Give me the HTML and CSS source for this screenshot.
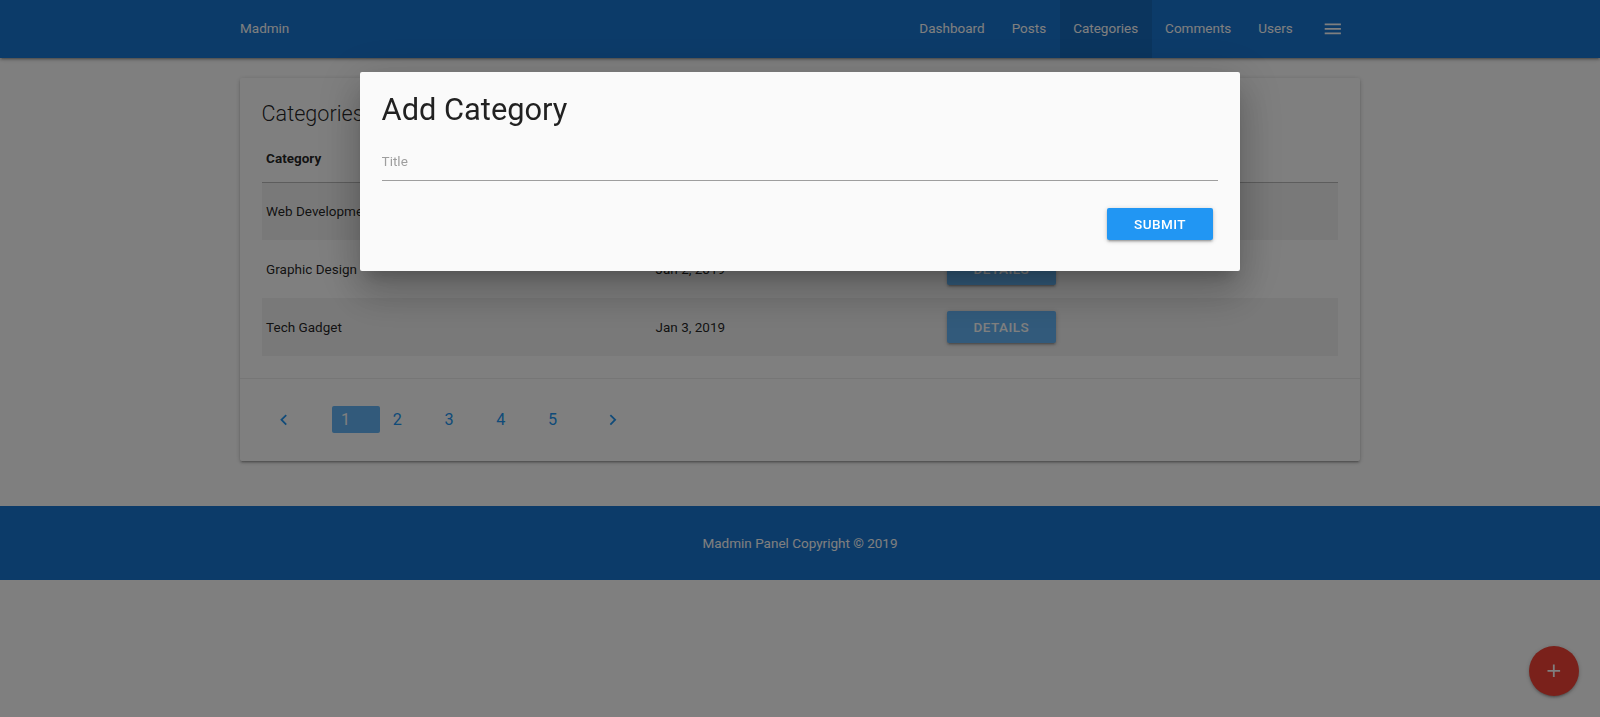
FILE: index.html
```html
<!DOCTYPE html>
<html lang="en">
<head>
<meta charset="utf-8">
<title>Madmin - Categories</title>
<link rel="stylesheet" href="styles.css">
</head>
<body>
<nav class="navbar">
  <div class="container nav-wrapper">
    <a class="brand" href="#">Madmin</a>
    <ul class="nav-links">
      <li><a href="#">Dashboard</a></li>
      <li><a href="#">Posts</a></li>
      <li class="active"><a href="#">Categories</a></li>
      <li><a href="#">Comments</a></li>
      <li><a href="#">Users</a></li>
      <li><a href="#" class="menu-link"><svg viewBox="0 0 24 24"><path d="M3 18h18v-2H3v2zm0-5h18v-2H3v2zm0-7v2h18V6H3z"/></svg></a></li>
    </ul>
  </div>
</nav>

<main class="main">
  <div class="container">
    <div class="card">
      <div class="card-content">
        <span class="card-title">Categories</span>
        <table class="striped">
          <thead>
            <tr><th class="col-name">Category</th><th class="col-date">Date Created</th><th>Actions</th></tr>
          </thead>
          <tbody>
            <tr><td>Web Development</td><td>Jan 1, 2019</td><td><a href="#" class="btn btn-light">Details</a></td></tr>
            <tr><td>Graphic Design</td><td>Jan 2, 2019</td><td><a href="#" class="btn btn-light">Details</a></td></tr>
            <tr><td>Tech Gadget</td><td>Jan 3, 2019</td><td><a href="#" class="btn btn-light">Details</a></td></tr>
          </tbody>
        </table>
      </div>
      <div class="card-action">
        <ul class="pagination">
          <li class="chev prev"><a href="#"><svg viewBox="0 0 24 24"><path d="M15.41 7.41L14 6l-6 6 6 6 1.41-1.41L10.83 12z"/></svg></a></li>
          <li class="num active"><a href="#">1</a></li>
          <li class="num"><a href="#">2</a></li>
          <li class="num"><a href="#">3</a></li>
          <li class="num"><a href="#">4</a></li>
          <li class="num"><a href="#">5</a></li>
          <li class="chev next"><a href="#"><svg viewBox="0 0 24 24"><path d="M10 6L8.59 7.41 13.17 12l-4.58 4.59L10 18l6-6z"/></svg></a></li>
        </ul>
      </div>
    </div>
  </div>
</main>

<footer class="page-footer">
  <div class="footer-text">Madmin Panel Copyright © 2019</div>
</footer>

<a href="#" class="fab"><svg viewBox="0 0 24 24"><path d="M19 13h-6v6h-2v-6H5v-2h6V5h2v6h6v2z"/></svg></a>

<div class="modal-overlay"></div>

<div class="modal">
  <div class="modal-content">
    <h4 class="modal-title">Add Category</h4>
    <form class="modal-form">
      <div class="field">
        <input type="text" placeholder="Title">
      </div>
      <div class="actions">
        <button type="button" class="btn btn-primary">Submit</button>
      </div>
    </form>
  </div>
</div>
</body>
</html>
```

FILE: styles.css
```css
* { box-sizing: border-box; }

html, body {
  margin: 0;
  padding: 0;
}

body {
  font-family: Roboto, "Noto Sans", "Liberation Sans", sans-serif;
  font-size: 13.5px;
  line-height: 1.5;
  color: rgba(0, 0, 0, 0.87);
  background: #fff;
}

a { text-decoration: none; }

.container {
  width: 70%;
  margin: 0 auto;
}

/* Navbar */
.navbar {
  position: relative;
  z-index: 2;
  height: 57.6px;
  background: #1976d2;
  box-shadow: 0 2px 2px 0 rgba(0,0,0,.14), 0 3px 1px -2px rgba(0,0,0,.12), 0 1px 5px 0 rgba(0,0,0,.2);
}

.nav-wrapper {
  display: flex;
  justify-content: space-between;
  height: 100%;
}

.brand {
  color: #fff;
  font-size: 13.5px;
  line-height: 57.6px;
}

.nav-links {
  display: flex;
  list-style: none;
  margin: 0 2.6px 0 0;
  padding: 0;
}

.nav-links a {
  display: block;
  height: 57.6px;
  padding: 0 13.5px;
  color: #fff;
  font-size: 13.5px;
  line-height: 57.6px;
}

.nav-links .active a {
  background: rgba(0, 0, 0, 0.1);
}

.nav-links .menu-link {
  display: flex;
  align-items: center;
  margin-left: 2.6px;
}

.menu-link svg {
  display: block;
  width: 21.6px;
  height: 21.6px;
  fill: #fff;
}

/* Main */
.main {
  padding: 20.4px 0 45px;
}

.card {
  background: #fff;
  border-radius: 2px;
  box-shadow: 0 2px 2px 0 rgba(0,0,0,.14), 0 3px 1px -2px rgba(0,0,0,.12), 0 1px 5px 0 rgba(0,0,0,.2);
}

.card-content {
  padding: 21.6px;
}

.card-title {
  display: block;
  font-size: 21.6px;
  font-weight: 300;
  line-height: 28.8px;
  margin-bottom: 7.2px;
}

.striped {
  width: 100%;
  border-collapse: collapse;
}

.striped thead tr {
  border-bottom: 1px solid rgba(0, 0, 0, 0.12);
}

.striped th {
  text-align: left;
  font-weight: 700;
  padding: 12.6px 4.5px 13.1px;
  line-height: 20.25px;
}

.striped .col-name { width: 36.17%; }
.striped .col-date { width: 27.02%; }

.striped td {
  height: 58.1px;
  padding: 0 4.5px;
  vertical-align: middle;
  line-height: 20.25px;
}

.striped tbody tr:nth-child(odd) {
  background: #f2f2f2;
}

.btn {
  display: inline-block;
  vertical-align: middle;
  height: 32.4px;
  padding: 0 27px;
  border: 0;
  border-radius: 2px;
  color: #fff;
  font-family: inherit;
  font-size: 13.5px;
  font-weight: 500;
  line-height: 32.4px;
  letter-spacing: 0.45px;
  text-transform: uppercase;
  box-shadow: 0 2px 2px 0 rgba(0,0,0,.14), 0 3px 1px -2px rgba(0,0,0,.12), 0 1px 5px 0 rgba(0,0,0,.2);
  cursor: pointer;
}

.btn-light { background: #64b5f6; }
.btn-primary { background: #2196f3; }

/* Pagination */
.card-action {
  border-top: 1px solid rgba(160, 160, 160, 0.2);
  padding: 27.6px 21.6px 27.2px;
}

.pagination {
  display: flex;
  align-items: center;
  list-style: none;
  margin: 0;
  padding: 0;
}

.pagination li {
  height: 27px;
  border-radius: 2px;
}

.pagination a {
  display: inline-block;
  padding: 0 9px;
  color: #2196f3;
  font-size: 16.2px;
  line-height: 27px;
}

.pagination .num {
  width: 47.7px;
  margin-right: 4.1px;
}

.pagination .active {
  background: #64b5f6;
}

.pagination .active a {
  color: #fff;
}

.pagination .chev a {
  display: flex;
  align-items: center;
  height: 27px;
}

.pagination .chev svg {
  width: 21.6px;
  height: 21.6px;
  fill: #2196f3;
}

.pagination .prev {
  margin-left: 2.2px;
  margin-right: 28.6px;
}

.pagination .next {
  margin-left: 2.3px;
}

/* Footer */
.page-footer {
  height: 74px;
  display: flex;
  align-items: center;
  justify-content: center;
  background: #1976d2;
  color: #fff;
  font-size: 13.5px;
}

/* Floating button */
.fab {
  position: fixed;
  right: 20.7px;
  bottom: 20.7px;
  width: 50.4px;
  height: 50.4px;
  border-radius: 50%;
  background: #f44336;
  display: flex;
  align-items: center;
  justify-content: center;
  box-shadow: 0 2px 2px 0 rgba(0,0,0,.14), 0 3px 1px -2px rgba(0,0,0,.12), 0 1px 5px 0 rgba(0,0,0,.2);
}

.fab svg {
  width: 21.6px;
  height: 21.6px;
  fill: #fff;
}

/* Modal */
.modal-overlay {
  position: fixed;
  top: 0;
  left: 0;
  right: 0;
  bottom: 0;
  background: #000;
  opacity: 0.5;
  z-index: 10;
}

.modal {
  position: fixed;
  top: 10%;
  left: 0;
  right: 0;
  margin: 0 auto;
  width: 55%;
  background: #fafafa;
  border-radius: 2px;
  z-index: 20;
  box-shadow: 0 24px 38px 3px rgba(0,0,0,.14), 0 9px 46px 8px rgba(0,0,0,.12), 0 11px 15px -7px rgba(0,0,0,.2);
}

.modal-content {
  padding: 21.6px;
}

.modal-title {
  margin: 0;
  font-size: 30.8px;
  font-weight: 400;
  line-height: 33.9px;
  color: rgba(0, 0, 0, 0.87);
}

.modal-form {
  margin: 0;
}

.field {
  margin-top: 14.7px;
}

.field input {
  display: block;
  width: 100%;
  height: 38.8px;
  padding: 0;
  border: 0;
  border-bottom: 1px solid #9e9e9e;
  background: transparent;
  font-family: inherit;
  font-size: 13.5px;
  color: rgba(0, 0, 0, 0.87);
  outline: none;
}

.field input::placeholder {
  color: #9e9e9e;
  opacity: 1;
}

.actions {
  display: flex;
  justify-content: flex-end;
  margin-top: 27px;
  padding: 0 5.4px 9px 0;
}
```
